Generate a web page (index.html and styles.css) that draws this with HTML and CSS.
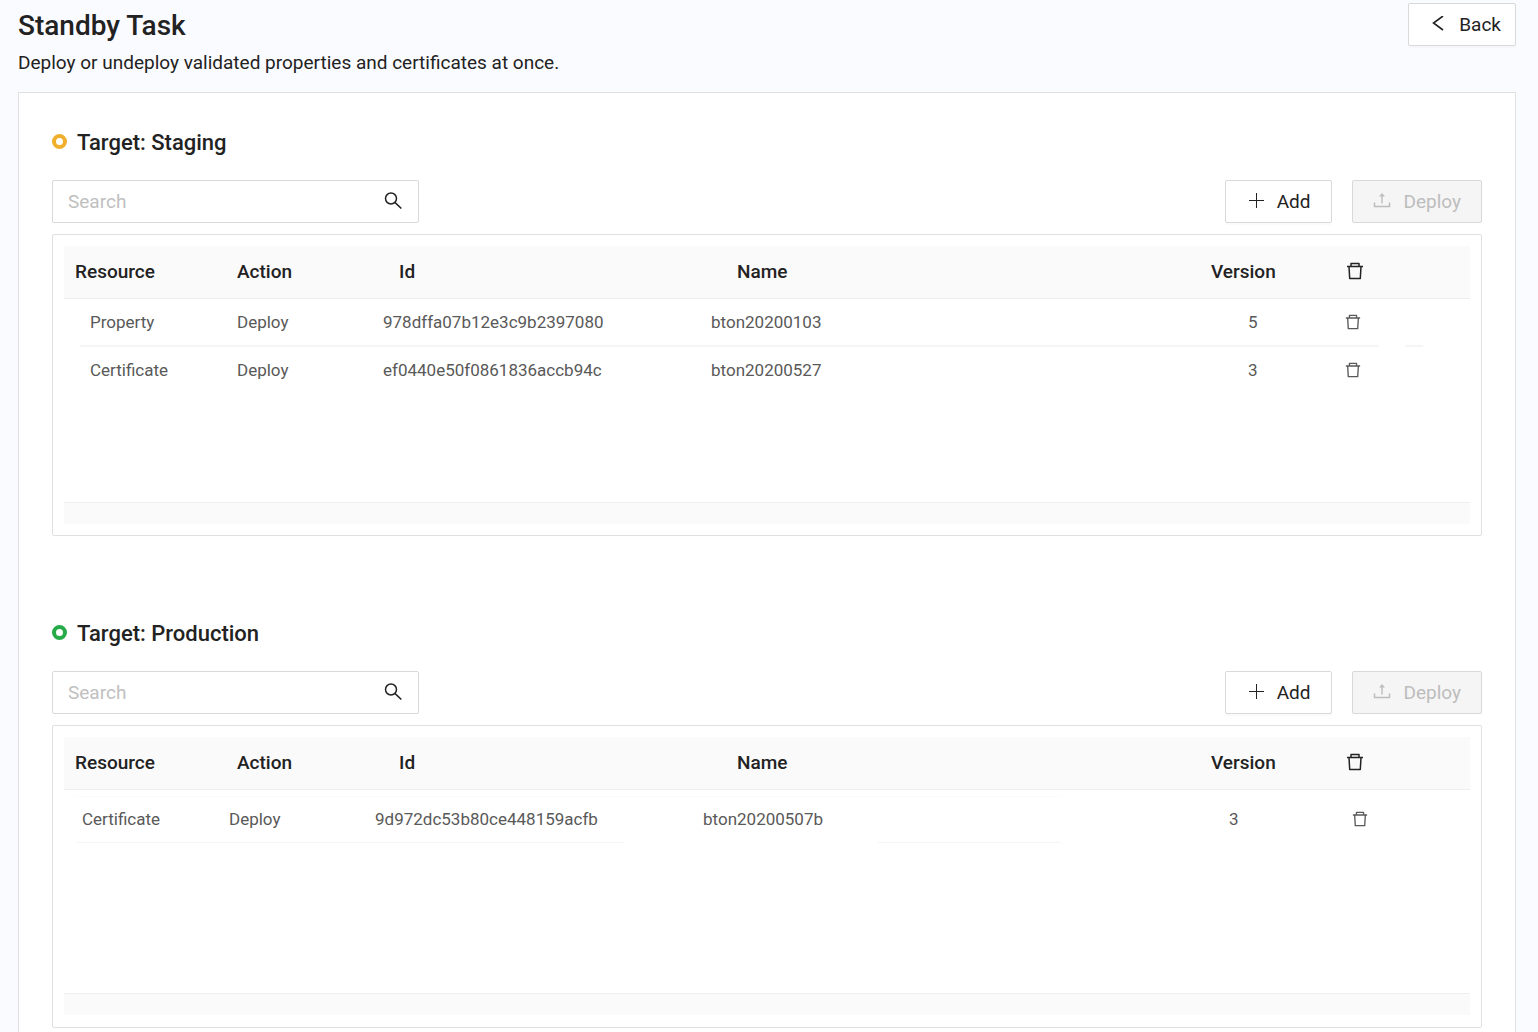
FILE: index.html
```html
<!DOCTYPE html>
<html lang="en">
<head>
<meta charset="utf-8">
<meta name="viewport" content="width=device-width, initial-scale=1">
<title>Standby Task</title>
<link rel="stylesheet" href="styles.css">
</head>
<body>
<svg class="sprite" aria-hidden="true">
  <symbol id="trash" viewBox="0 0 16 18"><path d="M0 4.500h16M4 4.500V1.500h8v3M2 4.500l.7 12h10.600l.7-12" fill="none" stroke="currentColor" stroke-width="1.500" stroke-linejoin="round"/></symbol>
  <symbol id="search" viewBox="0 0 18 18"><circle cx="7" cy="6.500" r="5.500" fill="none" stroke="currentColor" stroke-width="1.500"/><path d="M11 10.500l6.300 6" fill="none" stroke="currentColor" stroke-width="1.700"/></symbol>
  <symbol id="plus" viewBox="0 0 16 16"><path d="M0 7.500h15M7.500 0v15" fill="none" stroke="currentColor" stroke-width="1"/></symbol>
  <symbol id="upload" viewBox="0 0 18 16"><path d="M1.500 9.500v4h15v-4" fill="none" stroke="currentColor" stroke-width="1.500"/><path d="M9 10.500V2" fill="none" stroke="currentColor" stroke-width="1.400"/><path d="M9 0l3 3.500H6z" fill="currentColor"/></symbol>
  <symbol id="back" viewBox="0 0 12 16"><path d="M11 0L1.500 7l9.500 7" fill="none" stroke="currentColor" stroke-width="1.600"/></symbol>
</svg>
<header class="page-header">
  <div class="page-heading">
    <h1 class="page-title">Standby Task</h1>
    <p class="page-note">Deploy or undeploy validated properties and certificates at once.</p>
  </div>
  <button class="button button-back" type="button"><svg class="icon-back"><use href="#back"/></svg>Back</button>
</header>
<main class="panel">
  <section class="target target-staging">
    <h2 class="target-title"><span class="ring ring-staging"></span>Target: Staging</h2>
    <div class="toolbar">
      <div class="search">
        <input class="search-input" type="text" placeholder="Search" aria-label="Search staging">
        <button class="icon-button" type="button" aria-label="Search"><svg class="icon"><use href="#search"/></svg></button>
      </div>
      <button class="button" type="button"><svg class="icon-small"><use href="#plus"/></svg>Add</button>
      <button class="button button-deploy" type="button" disabled><svg class="icon-upload"><use href="#upload"/></svg>Deploy</button>
    </div>
    <div class="card">
      <div class="table-area">
        <table class="table">
          <colgroup><col class="col-resource"><col class="col-action"><col class="col-id"><col><col class="col-version"><col class="col-delete"></colgroup>
          <thead><tr><th>Resource</th><th>Action</th><th>Id</th><th>Name</th><th>Version</th><th><button class="icon-button" type="button" aria-label="Delete all"><svg class="icon-trash"><use href="#trash"/></svg></button></th></tr></thead>
          <tbody>
            <tr class="lined"><td>Property</td><td>Deploy</td><td>978dffa07b12e3c9b2397080</td><td>bton20200103</td><td>5</td><td><button class="icon-button" type="button" aria-label="Delete"><svg class="icon-small"><use href="#trash"/></svg></button></td></tr>
            <tr><td>Certificate</td><td>Deploy</td><td>ef0440e50f0861836accb94c</td><td>bton20200527</td><td>3</td><td><button class="icon-button" type="button" aria-label="Delete"><svg class="icon-small"><use href="#trash"/></svg></button></td></tr>
          </tbody>
        </table>
      </div>
      <div class="table-foot"></div>
    </div>
  </section>
  <section class="target target-production">
    <h2 class="target-title"><span class="ring ring-production"></span>Target: Production</h2>
    <div class="toolbar">
      <div class="search">
        <input class="search-input" type="text" placeholder="Search" aria-label="Search production">
        <button class="icon-button" type="button" aria-label="Search"><svg class="icon"><use href="#search"/></svg></button>
      </div>
      <button class="button" type="button"><svg class="icon-small"><use href="#plus"/></svg>Add</button>
      <button class="button button-deploy" type="button" disabled><svg class="icon-upload"><use href="#upload"/></svg>Deploy</button>
    </div>
    <div class="card">
      <div class="table-area">
        <table class="table">
          <colgroup><col class="col-resource"><col class="col-action"><col class="col-id"><col><col class="col-version"><col class="col-delete"></colgroup>
          <thead><tr><th>Resource</th><th>Action</th><th>Id</th><th>Name</th><th>Version</th><th><button class="icon-button" type="button" aria-label="Delete all"><svg class="icon-trash"><use href="#trash"/></svg></button></th></tr></thead>
          <tbody>
            <tr class="lined"><td>Certificate</td><td>Deploy</td><td>9d972dc53b80ce448159acfb</td><td>bton20200507b</td><td>3</td><td><button class="icon-button" type="button" aria-label="Delete"><svg class="icon-small"><use href="#trash"/></svg></button></td></tr>
          </tbody>
        </table>
      </div>
      <div class="table-foot"></div>
    </div>
  </section>
</main>
</body>
</html>
```
FILE: styles.css
```css
* { box-sizing: border-box; }
body {
  margin: 0;
  min-height: 100vh;
  display: flex;
  flex-direction: column;
  padding: 0 22px 0 18px;
  background: #fafbff;
  color: #222;
  font-family: Roboto, "Liberation Sans", sans-serif;
  font-size: 19px;
}
button, input { font: inherit; color: inherit; }
svg { display: block; flex: none; }
.sprite { position: absolute; width: 0; height: 0; }
.page-header {
  display: flex;
  justify-content: space-between;
  align-items: flex-start;
  height: 92px;
  padding-top: 3px;
}
.page-heading { padding-top: 1px; }
.page-title { margin: 0; font-size: 28px; line-height: 44px; font-weight: 500; }
.page-note { margin: 0; line-height: 30px; }
.button {
  display: flex;
  align-items: center;
  gap: 12px;
  height: 43px;
  padding: 0 21px 1px 23px;
  border: 1px solid #d9d9d9;
  border-radius: 2px;
  background: #fff;
  box-shadow: 0 2px 0 rgba(0, 0, 0, .02);
}
.button-back { gap: 15px; padding: 0 14px 1px 23px; }
.button-deploy { padding: 0 20px 1px; background: #f5f5f5; color: #bdbdbd; box-shadow: none; }
.icon { width: 18px; height: 18px; }
.icon-trash { width: 16px; height: 18px; }
.icon-small { width: 16px; height: 16px; }
.icon-upload { width: 18px; height: 16px; }
.icon-back { width: 12px; height: 16px; }
.panel {
  flex: 1;
  padding: 32px 33px 4px;
  border: 1px solid #e0e0e0;
  border-bottom: 0;
  background: #fff;
}
.target + .target { margin-top: 80px; }
.target-title {
  display: flex;
  align-items: center;
  gap: 10px;
  margin: 0 0 20px;
  font-size: 22px;
  line-height: 35px;
  font-weight: 500;
}
.ring { width: 15px; height: 15px; margin-bottom: 2px; border: 4px solid; border-radius: 50%; }
.ring-staging { border-color: #f0b02e; }
.ring-production { border-color: #27ab49; }
.toolbar { display: flex; gap: 20px; margin-bottom: 11px; }
.search {
  display: flex;
  align-items: center;
  width: 367px;
  height: 43px;
  margin-right: auto;
  padding: 0 16px 1px 15px;
  border: 1px solid #d9d9d9;
  border-radius: 2px;
}
.search-input { flex: 1; min-width: 0; padding: 0; border: 0; outline: 0; background: none; }
.search-input::placeholder { color: #bfbfbf; opacity: 1; }
.icon-button { display: block; padding: 0; border: 0; background: none; }
.card { padding: 11px; border: 1px solid #e0e0e0; border-radius: 2px; }
.target-production .card { padding-bottom: 12px; }
.table-area { min-height: 256px; }
.table { width: 100%; table-layout: fixed; border-collapse: separate; border-spacing: 0; }
.col-resource { width: 154px; }
.col-action { width: 146px; }
.col-id { width: 328px; }
.col-version { width: 136px; }
.col-delete { width: 134px; }
th {
  height: 53px;
  padding: 0 0 2px 11px;
  border-bottom: 1px solid #eee;
  background: #fafafa;
  font-size: 19px;
  font-weight: 500;
  text-align: left;
}
th:nth-child(2) { padding-left: 19px; }
th:nth-child(3) { padding-left: 35px; }
th:nth-child(4) { padding-left: 45px; }
td { height: 48px; padding: 0 0 3px 19px; color: #595959; font-size: 17px; }
.target-staging td:first-child { padding-left: 26px; }
.target-staging td:nth-child(5) { padding-left: 48px; }
.target-staging td:nth-child(6) { padding-left: 9px; }
.target-staging .lined {
  background: linear-gradient(to right, transparent 16px, #f5f5f5 16px calc(100% - 91px), transparent calc(100% - 91px) calc(100% - 65px), #f5f5f5 calc(100% - 65px) calc(100% - 47px), transparent calc(100% - 47px)) 0 100% / 100% 2px no-repeat;
}
.target-production td { height: 53px; padding: 4px 0 0 11px; }
.target-production td:first-child { padding-left: 18px; }
.target-production td:nth-child(5) { padding-left: 29px; }
.target-production td:nth-child(6) { padding-left: 16px; }
.target-production .lined {
  background:
    linear-gradient(to right, transparent 12px, #f5f5f5 12px 560px, transparent 560px 814px, #f5f5f5 814px 997px, transparent 997px) 0 100% / 100% 1px no-repeat,
    linear-gradient(to right, transparent 12px, #fbfbfb 12px 997px, transparent 997px) 0 6px / 100% 1px no-repeat;
}
.table-foot { height: 22px; border-top: 1px solid #eee; background: #fafafa; }
```
